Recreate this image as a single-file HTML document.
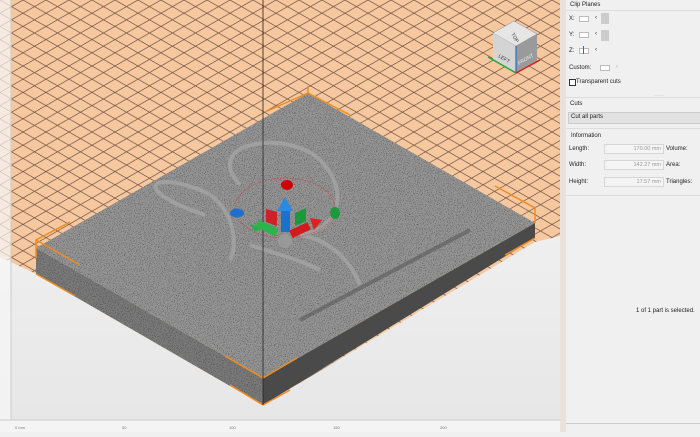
<!DOCTYPE html>
<html><head><meta charset="utf-8"><style>
html,body{margin:0;padding:0;width:700px;height:432px;overflow:hidden;background:#f0f0f0;font-family:"Liberation Sans",sans-serif}
#vp{position:absolute;left:0;top:0;width:560px;height:432px}
#panel{position:absolute;left:566px;top:0;width:134px;height:432px;background:#f0f0f0;font-size:6px;color:#222}
.t{position:absolute;white-space:nowrap}
.box{position:absolute;border:1px solid #bbb;background:#fff}
.fld{position:absolute;border:1px solid #d6d6d6;background:#f4f4f4;color:#999;text-align:right;font-size:5.5px;line-height:9px;padding-right:2px;box-sizing:border-box}
</style></head><body>
<div id="vp">
<svg width="560" height="432" viewBox="0 0 560 432">
<defs>
<linearGradient id="bg" x1="0" y1="0" x2="0" y2="1"><stop offset="0" stop-color="#fafafa"/><stop offset="1" stop-color="#e6e6e6"/></linearGradient>
<pattern id="grid" patternUnits="userSpaceOnUse" width="23" height="13.2">
<rect width="23" height="13.2" fill="#f5c8a0"/>
<path d="M0 0 L23 13.2 M0 13.2 L23 0" stroke="#6b4a3a" stroke-width="0.7"/>
</pattern>
<filter id="noise" x="0" y="0" width="1" height="1"><feTurbulence type="fractalNoise" baseFrequency="1.1" numOctaves="2" seed="3"/><feColorMatrix type="matrix" values="0 0 0 0 0  0 0 0 0 0  0 0 0 0 0  3.5 0 0 0 -1.8"/><feComposite in2="SourceGraphic" operator="in"/></filter>
</defs>
<rect width="560" height="432" fill="url(#bg)"/>
<polygon points="0,0 560,0 560,236 535,242 263,405 36,274 0,257" fill="url(#grid)"/>
<polygon points="36,248 263,378 263,405 36,274" fill="#7a7a7a"/>
<polygon points="263,378 535,223 535,238 263,405" fill="#4a4a4a"/>
<polygon points="308,93 535,223 263,378 36,248" fill="#959595"/>
<polygon points="308,93 535,223 263,378 36,248" fill="#000" filter="url(#noise)" opacity="0.45"/>
<polygon points="36,248 263,378 263,405 36,274" fill="#000" filter="url(#noise)" opacity="0.4"/>
<g fill="none" stroke="#a8a8a8" stroke-width="4" opacity="0.7">
<path d="M240 185 C200 140 290 130 320 160 C350 190 340 230 300 235"/>
<path d="M205 215 C130 190 150 170 200 190 C230 200 240 240 230 260"/>
<path d="M300 235 C330 240 350 260 360 285"/>
<path d="M250 245 C280 255 300 260 320 270"/>
</g>
<g fill="none" stroke="#5a5a5a" stroke-width="4" opacity="0.6"><path d="M300 320 L470 230"/></g>
<g stroke="#f08c20" stroke-width="1.5" fill="none">
<path d="M36 258 L36 240 L70 222 M36 240 L80 265"/>
<path d="M308 93 L265 112 M308 93 L350 115 M308 93 L308 86"/>
<path d="M535 223 L535 208 L495 186 M535 238 L505 255"/>
<path d="M263 378 L225 356 M263 378 L297 358 M263 405 L230 385 M263 405 L290 390"/>
<path d="M36 274 L75 296"/>
</g>
<line x1="263" y1="0" x2="263" y2="405" stroke="#222" stroke-width="0.8"/>
<ellipse cx="285" cy="208" rx="50" ry="30" fill="none" stroke="#d33" stroke-width="0.7" stroke-dasharray="2 1" opacity="0.7"/>
<ellipse cx="287" cy="185" rx="6" ry="5" fill="#c00"/>
<ellipse cx="237" cy="213" rx="7" ry="4.5" fill="#1e6fd0"/>
<ellipse cx="335" cy="213" rx="5" ry="6" fill="#1a9a3a"/>
<polygon points="266,209 277,212 277,226 266,222" fill="#d0202a"/>
<polygon points="295,213 306,208 306,221 295,226" fill="#1a9a3a"/>
<rect x="281" y="210" width="9" height="22" fill="#1e6fd0"/>
<polygon points="277,211 285,197 293,211" fill="#2a8ae0"/>
<path d="M262 228 L250 224 L255 232 Z" fill="#22b04a"/><rect x="256" y="224" width="22" height="8" fill="#2cb34a" transform="rotate(25 267 228)"/>
<rect x="290" y="226" width="20" height="8" fill="#d01c1c" transform="rotate(-25 300 230)"/><path d="M310 218 L322 220 L314 230Z" fill="#e02020"/>
<circle cx="285" cy="241" r="7" fill="#999"/>
<polygon points="493,33 514,21 537,34 516,46" fill="#e6e6e6" stroke="#888" stroke-width="0.5"/>
<polygon points="493,33 516,46 516,72 493,60" fill="#d4d4d4"/>
<polygon points="516,46 537,34 537,61 516,72" fill="#9a9a9a"/>
<line x1="516" y1="46" x2="516" y2="72" stroke="#1e6fd0" stroke-width="1.2"/>
<line x1="488" y1="57" x2="516" y2="73" stroke="#22aa33" stroke-width="1.5"/>
<line x1="516" y1="73" x2="540" y2="60" stroke="#d02020" stroke-width="1.5"/>
<text x="498" y="57" font-size="5" fill="#333" transform="rotate(30 498 57)">LEFT</text>
<text x="519" y="65" font-size="5" fill="#eee" transform="rotate(-30 519 65)">FRONT</text>
<text x="511" y="34" font-size="5" fill="#333" transform="rotate(60 511 34)">TOP</text>
<rect x="0" y="0" width="11" height="420" fill="#f7f7f7" opacity="0.7"/>
<line x1="11" y1="0" x2="11" y2="420" stroke="#ccc"/>
<rect x="0" y="420" width="560" height="12" fill="#f4f4f4"/>
<line x1="0" y1="420" x2="560" y2="420" stroke="#ccc"/>
<g font-size="4" fill="#777"><text x="15" y="429">0 mm</text><text x="122" y="429">50</text><text x="229" y="429">100</text><text x="333" y="429">150</text><text x="440" y="429">200</text></g>
</svg>
</div>
<div style="position:absolute;left:560px;top:0;width:6px;height:432px;background:#e8e2da"></div>
<div id="panel">
<div class="t" style="left:4px;top:2px">Clip Planes</div>
<div style="position:absolute;left:0;top:10px;width:134px;border-top:1px solid #ddd"></div>
<div class="t" style="left:3px;top:16px">X:</div><div class="box" style="left:13px;top:16px;width:8px;height:4px"></div><div class="t" style="left:29px;top:15px">‹</div><div style="position:absolute;left:35px;top:13px;width:8px;height:11px;background:#ccc"></div>
<div class="t" style="left:3px;top:32px">Y:</div><div class="box" style="left:13px;top:32px;width:8px;height:4px"></div><div class="t" style="left:29px;top:31px">‹</div><div style="position:absolute;left:35px;top:30px;width:8px;height:11px;background:#ccc"></div>
<div class="t" style="left:3px;top:48px">Z:</div><div class="box" style="left:13px;top:48px;width:8px;height:4px"></div><div style="position:absolute;left:17px;top:46px;width:1px;height:8px;background:#1e6fd0"></div><div class="t" style="left:29px;top:47px">‹</div>
<div class="t" style="left:3px;top:65px">Custom:</div><div class="box" style="left:34px;top:65px;width:8px;height:4px"></div><div class="t" style="left:50px;top:64px;color:#aaa">‹</div>
<div class="box" style="left:3px;top:79px;width:5px;height:5px;border-color:#333"></div><div class="t" style="left:10px;top:79px">Transparent cuts</div>
<div class="t" style="left:88px;top:92px;color:#bbb;font-size:5px">.......</div>
<div style="position:absolute;left:0;top:97px;width:134px;border-top:1px solid #ddd"></div>
<div class="t" style="left:4px;top:101px">Cuts</div>
<div style="position:absolute;left:2px;top:112px;width:132px;height:10px;background:#e2e2e2;border:1px solid #ccc"></div><div class="t" style="left:5px;top:114px">Cut all parts</div>
<div style="position:absolute;left:0;top:128px;width:134px;border-top:1px solid #ddd"></div>
<div class="t" style="left:5px;top:133px">Information</div>
<div class="t" style="left:3px;top:146px">Length:</div><div class="fld" style="left:38px;top:144px;width:60px;height:10px">170.00 mm</div><div class="t" style="left:100px;top:146px">Volume:</div>
<div class="t" style="left:3px;top:162px">Width:</div><div class="fld" style="left:38px;top:160px;width:60px;height:10px">142.27 mm</div><div class="t" style="left:100px;top:162px">Area:</div>
<div class="t" style="left:3px;top:179px">Height:</div><div class="fld" style="left:38px;top:177px;width:60px;height:10px">17.57 mm</div><div class="t" style="left:100px;top:179px">Triangles:</div>
<div style="position:absolute;left:0;top:195px;width:134px;border-top:1px solid #ddd"></div>
<div class="t" style="left:70px;top:308px">1 of 1 part is selected.</div>
<div style="position:absolute;left:0;top:423px;width:134px;border-top:1px solid #ccc"></div>
</div>
</body></html>
